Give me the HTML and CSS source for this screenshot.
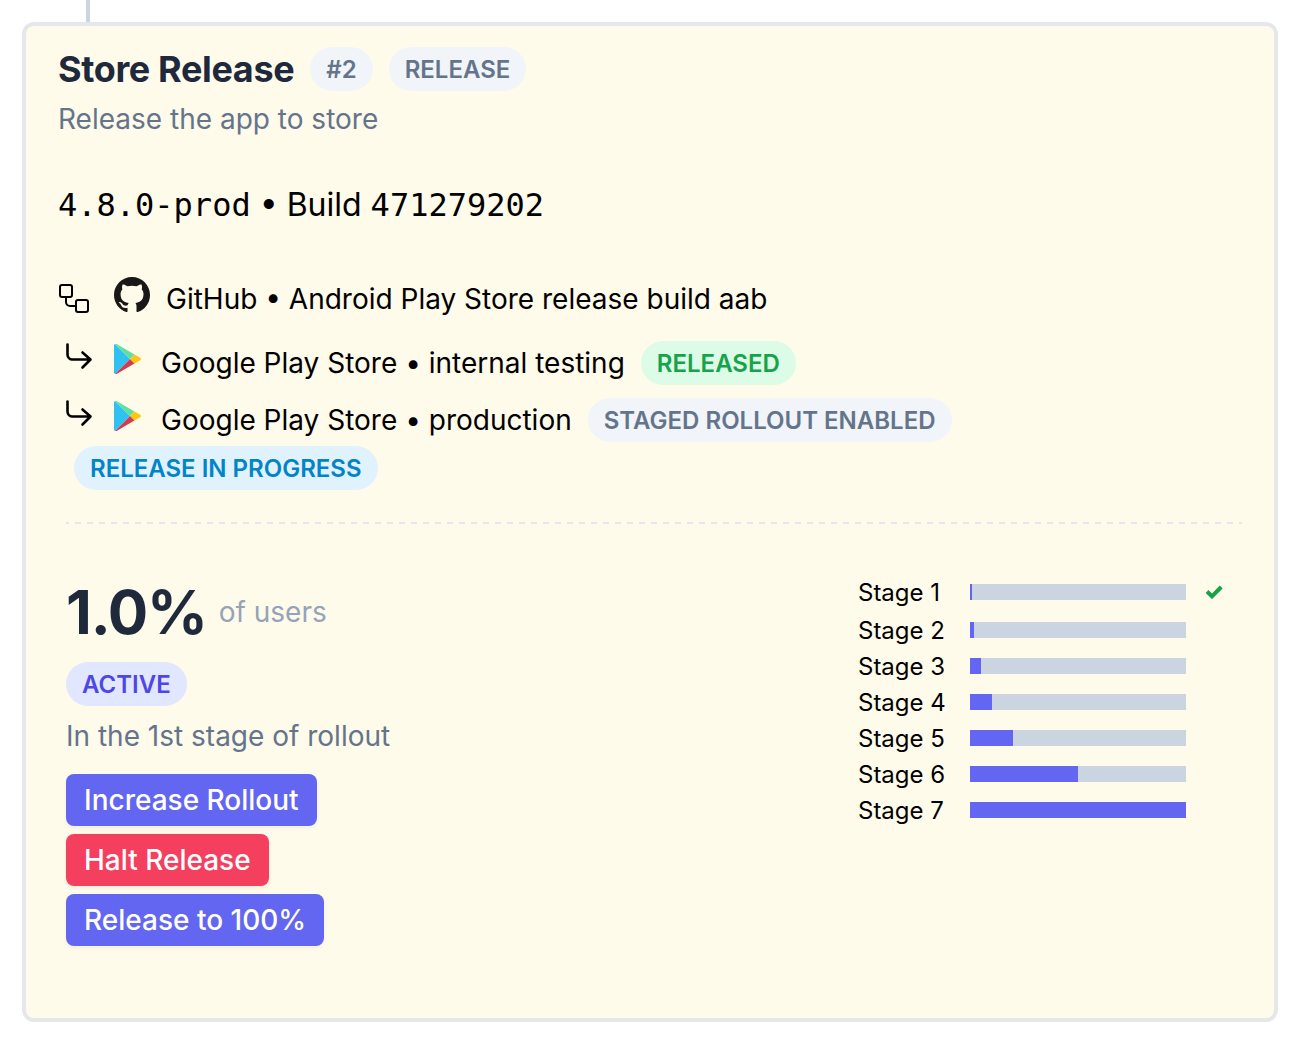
FILE: index.html
```html
<!DOCTYPE html>
<html lang="en">
  <head>
    <meta charset="UTF-8" />
    <meta name="viewport" content="width=device-width, initial-scale=1.0" />
    <title>Store Release</title>
    <link rel="stylesheet" href="styles.css">
  </head>
  <body>
    <div class="rail"></div>
    <section class="card">
      <header class="card-header">
        <h1>Store Release</h1>
        <span class="badge">#2</span>
        <span class="badge">RELEASE</span>
      </header>
      <p class="subtitle">Release the app to store</p>

      <p class="version"><span class="mono">4.8.0-prod</span> • Build <span class="mono">471279202</span></p>

      <!-- Where the build comes from and where it goes -->
      <div class="source">
        <svg class="icon-flow" viewBox="0 0 32 32" fill="none" stroke="#000" stroke-width="2">
          <rect x="2" y="2" width="12" height="12" rx="2" />
          <rect x="18" y="17" width="12" height="12" rx="2" />
          <path d="M8 14v5a4 4 0 0 0 4 4h6" />
        </svg>
        <svg class="icon-github" viewBox="0 0 16 16" fill="#191717">
          <path d="M8 0C3.58 0 0 3.58 0 8c0 3.54 2.29 6.53 5.47 7.59.4.07.55-.17.55-.38 0-.19-.01-.82-.01-1.49-2.01.37-2.53-.49-2.69-.94-.09-.23-.48-.94-.82-1.13-.28-.15-.68-.52-.01-.53.63-.01 1.08.58 1.23.82.72 1.21 1.87.87 2.33.66.07-.52.28-.87.51-1.07-1.78-.2-3.64-.89-3.64-3.95 0-.87.31-1.59.82-2.15-.08-.2-.36-1.02.08-2.12 0 0 .67-.21 2.2.82.64-.18 1.32-.27 2-.27s1.36.09 2 .27c1.53-1.04 2.2-.82 2.2-.82.44 1.1.16 1.92.08 2.12.51.56.82 1.27.82 2.15 0 3.07-1.87 3.75-3.65 3.95.29.25.54.73.54 1.48 0 1.07-.01 1.93-.01 2.2 0 .21.15.46.55.38A8.01 8.01 0 0 0 16 8c0-4.42-3.58-8-8-8z" />
        </svg>
        <span>GitHub • Android Play Store release build aab</span>
      </div>
      <div class="target">
        <svg class="icon-arrow" viewBox="0 0 28 28" fill="none" stroke="#000" stroke-width="2.600" stroke-linecap="round" stroke-linejoin="round">
          <path d="M1.500 1.500v10a5 5 0 0 0 5 5h18M16.500 9.500l8 7-8 8" />
        </svg>
        <svg class="icon-play" viewBox="0 0 28 30">
          <path fill="#2fc1f0" d="M0 1v28l1 1L16 15 1 0z" />
          <path fill="#5fe0a0" d="M1 0q1-.3 2 .3L20.500 10.500 16 15z" />
          <path fill="#ffc60f" d="M20.500 10.500l6 3.400q1.400 1.100 0 2.200l-6 3.400L16 15z" />
          <path fill="#d33b50" d="M16 15l4.500 4.500L3 29.700q-1 .6-2 .3z" />
        </svg>
        <span>Google Play Store • internal testing</span>
        <span class="badge badge-green">RELEASED</span>
      </div>
      <div class="target">
        <svg class="icon-arrow" viewBox="0 0 28 28" fill="none" stroke="#000" stroke-width="2.600" stroke-linecap="round" stroke-linejoin="round">
          <path d="M1.500 1.500v10a5 5 0 0 0 5 5h18M16.500 9.500l8 7-8 8" />
        </svg>
        <svg class="icon-play" viewBox="0 0 28 30">
          <path fill="#2fc1f0" d="M0 1v28l1 1L16 15 1 0z" />
          <path fill="#5fe0a0" d="M1 0q1-.3 2 .3L20.500 10.500 16 15z" />
          <path fill="#ffc60f" d="M20.500 10.500l6 3.400q1.400 1.100 0 2.200l-6 3.400L16 15z" />
          <path fill="#d33b50" d="M16 15l4.500 4.500L3 29.700q-1 .6-2 .3z" />
        </svg>
        <span>Google Play Store • production</span>
        <span class="badge">STAGED ROLLOUT ENABLED</span>
        <span class="badge badge-sky">RELEASE IN PROGRESS</span>
      </div>

      <!-- Staged rollout -->
      <div class="rollout">
        <div class="rollout-status">
          <p class="percent"><strong>1.0%</strong> <span>of users</span></p>
          <span class="badge badge-indigo">ACTIVE</span>
          <p class="stage-text">In the 1st stage of rollout</p>
          <div class="actions">
            <button type="button" class="btn">Increase Rollout</button>
            <button type="button" class="btn btn-danger">Halt Release</button>
            <button type="button" class="btn">Release to 100%</button>
          </div>
        </div>
        <div class="stages">
          <div class="stage stage-done">
            <span class="stage-name">Stage 1</span>
            <div class="bar"><div class="bar-fill" style="width: 1%"></div></div>
            <svg class="icon-check" viewBox="0 0 18 14" fill="none" stroke="#16a34a" stroke-width="4">
              <path d="M2 6.500l5 4.800L16.200 2" />
            </svg>
          </div>
          <div class="stage">
            <span class="stage-name">Stage 2</span>
            <div class="bar"><div class="bar-fill" style="width: 2%"></div></div>
          </div>
          <div class="stage">
            <span class="stage-name">Stage 3</span>
            <div class="bar"><div class="bar-fill" style="width: 5%"></div></div>
          </div>
          <div class="stage">
            <span class="stage-name">Stage 4</span>
            <div class="bar"><div class="bar-fill" style="width: 10%"></div></div>
          </div>
          <div class="stage">
            <span class="stage-name">Stage 5</span>
            <div class="bar"><div class="bar-fill" style="width: 20%"></div></div>
          </div>
          <div class="stage">
            <span class="stage-name">Stage 6</span>
            <div class="bar"><div class="bar-fill" style="width: 50%"></div></div>
          </div>
          <div class="stage">
            <span class="stage-name">Stage 7</span>
            <div class="bar"><div class="bar-fill" style="width: 100%"></div></div>
          </div>
        </div>
      </div>
    </section>
  </body>
</html>
```
FILE: styles.css
```css
* {
  box-sizing: border-box;
}
body {
  margin: 0;
  padding: 0 26px 26px 22px;
  background-color: #fff;
  color: #000;
  font-family: Inter, "Liberation Sans", sans-serif;
  font-size: 28px;
  line-height: 40px;
}
h1,
p {
  margin: 0;
}
svg {
  flex: none;
}

/* line from the previous step */
.rail {
  width: 4px;
  height: 22px;
  margin-left: 64px;
  background-color: #cbd5e1;
}

.card {
  padding: 20px 32px 72px;
  background-color: #fffbeb;
  border: 4px solid #e5e7eb;
  border-radius: 12px;
}
.card-header {
  display: flex;
  align-items: center;
  gap: 16px;
}
h1 {
  color: #1e293b;
  font-size: 36px;
  font-weight: 700;
  line-height: 46px;
  letter-spacing: -0.01em;
}
.subtitle,
.stage-text {
  color: #64748b;
}
.subtitle {
  padding-top: 7px;
}

.badge {
  padding: 5px 16px 3px;
  border-radius: 22px;
  background-color: #f1f5f9;
  color: #64748b;
  font-size: 24px;
  font-weight: 600;
  line-height: 36px;
  white-space: nowrap;
}
.badge-green {
  background-color: #dcfce7;
  color: #16a34a;
}
.badge-sky {
  background-color: #e0f2fe;
  color: #0284c7;
}
.badge-indigo {
  background-color: #e0e7ff;
  color: #4f46e5;
}

.version {
  margin-top: 42px;
  font-size: 32px;
  line-height: 48px;
}
.mono {
  font-family: "DejaVu Sans Mono", monospace;
}

.source {
  display: flex;
  align-items: center;
  margin-top: 48px;
  padding-bottom: 7px;
}
.target {
  display: flex;
  flex-wrap: wrap;
  align-items: center;
  row-gap: 4px;
  margin-top: 13px;
}
.target .badge {
  margin-left: 16px;
}
.icon-flow {
  width: 32px;
  height: 32px;
  margin-right: 24px;
}
.icon-github {
  width: 36px;
  height: 36px;
  margin: 0 16px 8px 0;
}
.icon-arrow {
  width: 28px;
  height: 28px;
  margin: 0 20px 12px 8px;
}
.icon-play {
  width: 28px;
  height: 30px;
  margin: 0 19px 8px 0;
}

.rollout {
  display: flex;
  justify-content: space-between;
  margin: 32px 0 0 8px;
  padding-top: 50px;
  /* wider gaps than border-style: dashed gives */
  background: linear-gradient(to right, transparent 50%, #e5e7eb 50%) 3px 0 / 12px 2px repeat-x;
}
.rollout-status {
  display: flex;
  flex-direction: column;
  align-items: flex-start;
}
.percent {
  display: flex;
  align-items: center;
  gap: 12px;
  padding-bottom: 10px;
  color: #94a3b8;
}
.percent strong {
  color: #1e293b;
  font-size: 60px;
  font-weight: 700;
  line-height: 80px;
  letter-spacing: -0.02em;
}
.stage-text {
  padding: 10px 0 18px;
}
.actions {
  display: flex;
  flex-direction: column;
  align-items: flex-start;
  gap: 8px;
}
.btn {
  padding: 6px 18px;
  border: 0;
  border-radius: 8px;
  background-color: #6366f1;
  color: #fff;
  font-family: inherit;
  font-size: 28px;
  font-weight: 500;
  line-height: 40px;
  box-shadow: 0 2px 4px rgba(0, 0, 0, 0.05);
}
.btn-danger {
  background-color: #f43f5e;
}

.stages {
  width: 384px;
  font-size: 24px;
  line-height: 34px;
}
.stage {
  display: grid;
  grid-template-columns: 112px 216px 1fr;
  align-items: center;
}
.stage-name {
  padding-top: 2px;
}
.stage-done {
  line-height: 38px;
}
.bar {
  height: 16px;
  background-color: #cbd5e1;
}
.bar-fill {
  height: 100%;
  background-color: #6366f1;
}
.icon-check {
  width: 18px;
  height: 14px;
  margin-left: 19px;
}
```
